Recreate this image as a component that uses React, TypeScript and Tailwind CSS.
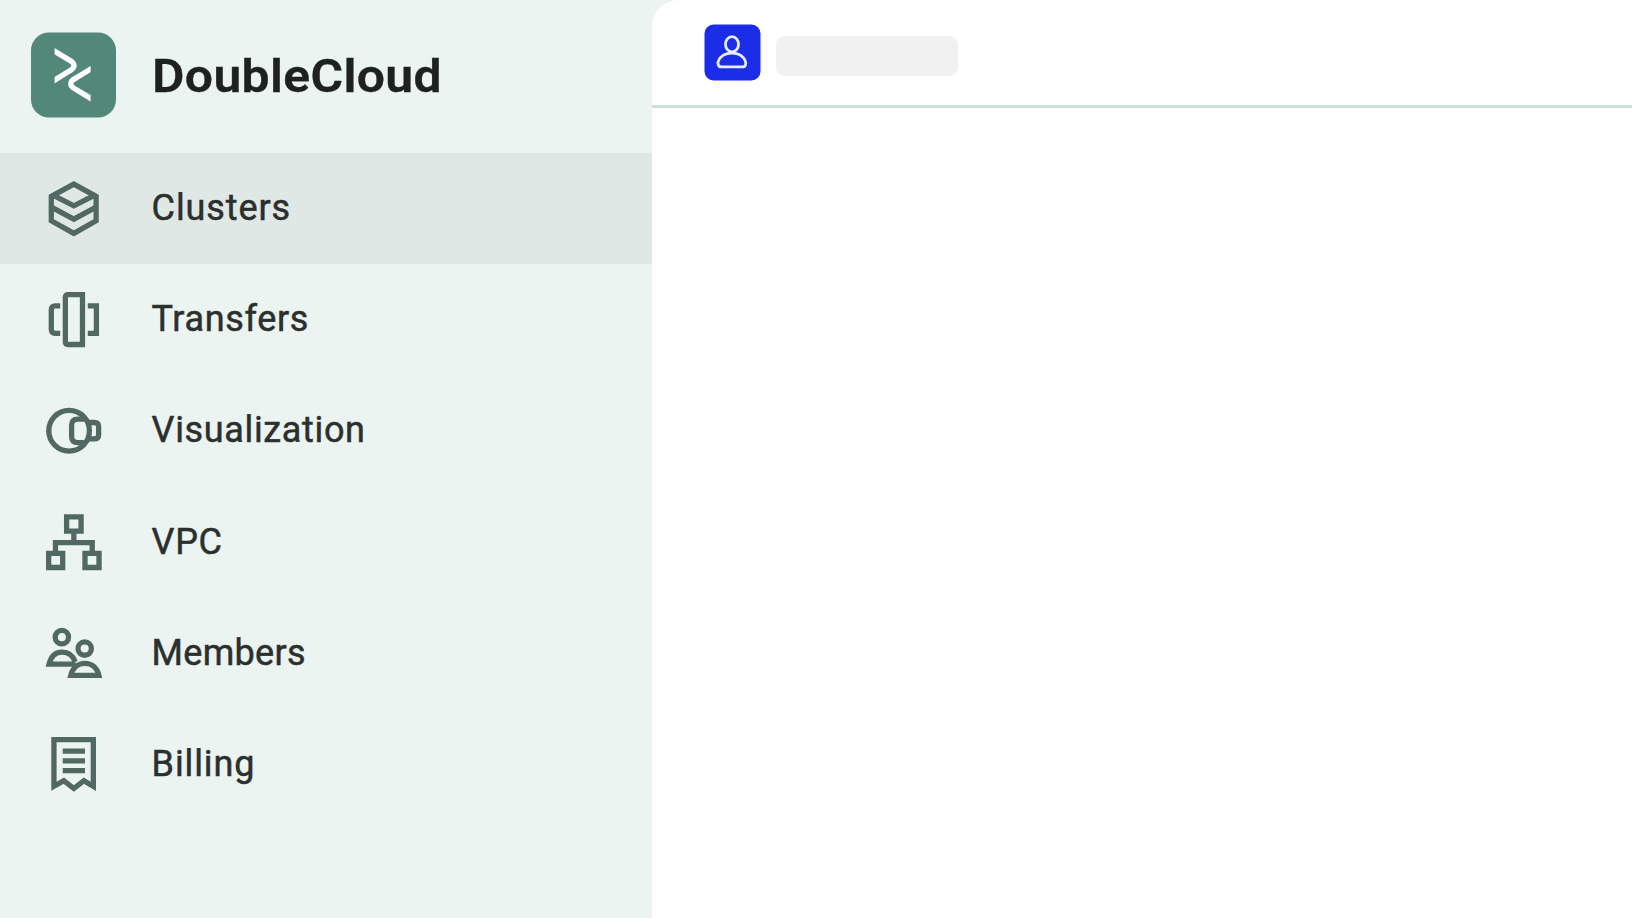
import type { ReactNode } from "react";

type NavItem = { label: string; tracking: string; icon: ReactNode };

function Icon({ children }: { children: ReactNode }) {
  return (
    <svg viewBox="0 0 20 20" className="h-[55.7px] w-[55.7px] shrink-0 overflow-visible" fill="none" stroke="#526863" strokeWidth="1.9">
      {children}
    </svg>
  );
}

const items: NavItem[] = [
  {
    label: "Clusters",
    tracking: "tracking-[0.9px]",
    icon: (
      <>
        <path d="M10 1.1 18 5.5V14.3L10 18.8 1.9 14.3V5.5Z" />
        <path d="M2.3 5 10 8.9 17.7 5M1.9 9.4 10 13.7 18 9.4" />
      </>
    ),
  },
  {
    label: "Transfers",
    tracking: "tracking-[0.65px]",
    icon: (
      <>
        <path d="M6.95 1.8Q6.95.95 7.9.95H13.1V18.85H7.9Q6.95 18.85 6.95 18Z" />
        <path d="M5.1 4.95H3.3Q1.9 4.95 1.9 6.4V13.4Q1.9 14.85 3.3 14.85H5.1M15 4.95H18.1V14.85H15" />
      </>
    ),
  },
  {
    label: "Visualization",
    tracking: "tracking-[0.65px]",
    icon: (
      <>
        <circle cx="8.3" cy="9.95" r="7.3" />
        <path d="M13.6 5.8H11.4Q9.2 5.8 9.2 8V12Q9.2 14.2 11.4 14.2H13.6M15.2 7H17.3Q18.9 7 18.9 8.4V11.5Q18.9 12.9 17.3 12.9H15.2" />
      </>
    ),
  },
  {
    label: "VPC",
    tracking: "tracking-[0.7px]",
    icon: (
      <path d="M7.4 .7H12.6V5.8H7.4ZM.95 13.8H6V18.85H.95ZM14 13.8H19.05V18.85H14ZM10 5.8V9.8M3.4 13.8V9.9H16.6V13.8" />
    ),
  },
  {
    label: "Members",
    tracking: "tracking-[0.3px]",
    icon: (
      <>
        <circle cx="5.7" cy="4" r="2.4" />
        <circle cx="13.9" cy="8.1" r="2.4" />
        <path d="M10.6 13.7H1.1C1.8 10.8 3.5 9.4 5.8 9.4S9.7 10.6 10.5 12.9M8.9 17.7H19C18.3 14.8 16.3 13.4 14 13.4S9.6 14.8 8.9 17.7Z" />
      </>
    ),
  },
  {
    label: "Billing",
    tracking: "tracking-[0.9px]",
    icon: (
      <path d="M2.85 17.7V.95H17V17.7L13.6 15.7 10 18.5 6.4 15.7ZM6 5.1H14M6 8.6H14M6 12.1H14" />
    ),
  },
];

function Sidebar() {
  return (
    <aside className="flex h-full w-[652px] shrink-0 flex-col bg-[#ebf4f1]">
      <div className="flex h-[153px] shrink-0 items-start pt-[32px] pl-[31.2px]">
        <svg viewBox="0 0 85 86" className="h-[86px] w-[85px] shrink-0">
          <clipPath id="mark">
            <rect x="23.6" y="10" width="36" height="65" />
          </clipPath>
          <rect y="0.5" width="85" height="85" rx="18" fill="#53877a" />
          <g fill="none" stroke="#fff" strokeWidth="5.4" clipPath="url(#mark)">
            <path d="M20 17.1 38 27.8Q48 33.3 38 39.3L20 50.3" />
            <path d="M63 35 45 46Q34.5 51.5 45 57.5L63 68.3" />
          </g>
        </svg>
        <span className="ml-[35.5px] origin-left scale-x-[1.06] pt-[17px] text-[47px] leading-[54px] font-semibold tracking-[0.35px] text-[#1e2120] [-webkit-text-stroke:0.4px_#1e2120]">
          DoubleCloud
        </span>
      </div>
      <nav className="flex flex-col">
        {items.map((item, i) => (
          <a
            key={item.label}
            className={`flex h-[111.3px] items-center pl-[45.7px] ${i === 0 ? "bg-[#e0e8e5]" : ""}`}
          >
            <Icon>{item.icon}</Icon>
            <span
              className={`ml-[50.2px] pb-[2px] text-[36px] leading-[42px] text-[#2b2f2d] [-webkit-text-stroke:0.5px_#2b2f2d] ${item.tracking}`}
            >
              {item.label}
            </span>
          </a>
        ))}
      </nav>
    </aside>
  );
}

export default function App() {
  return (
    <div className="flex h-[918px] w-[1632px] overflow-hidden bg-[#ebf4f1] font-['Roboto',sans-serif]">
      <Sidebar />
      <main className="flex min-w-0 flex-1 flex-col rounded-tl-[26px] bg-white">
        <header className="flex h-[108px] items-start border-b-[3px] border-[#d0dedb] pt-[24px] pl-[52px]">
          <svg viewBox="0 0 57 57" className="h-[57px] w-[57px] shrink-0">
            <rect x="0.5" y="0.5" width="56" height="56" rx="9" fill="#1c2de8" />
            <g fill="none" stroke="#e8eaff" strokeWidth="2.8">
              <ellipse cx="28" cy="20.3" rx="6.5" ry="7.6" />
              <path d="M17.3 42.9C14.2 42.9 13.3 39.5 14.4 37.1 16.5 31.8 22 29.1 28 29.1S39.2 31.8 41.3 37.1C42.4 39.5 41.7 42.9 38.5 42.9Z" />
            </g>
          </svg>
          <div className="mt-[12px] ml-[15px] h-[40px] w-[182px] rounded-[9px] bg-[#f1f1f1]" />
        </header>
      </main>
    </div>
  );
}
